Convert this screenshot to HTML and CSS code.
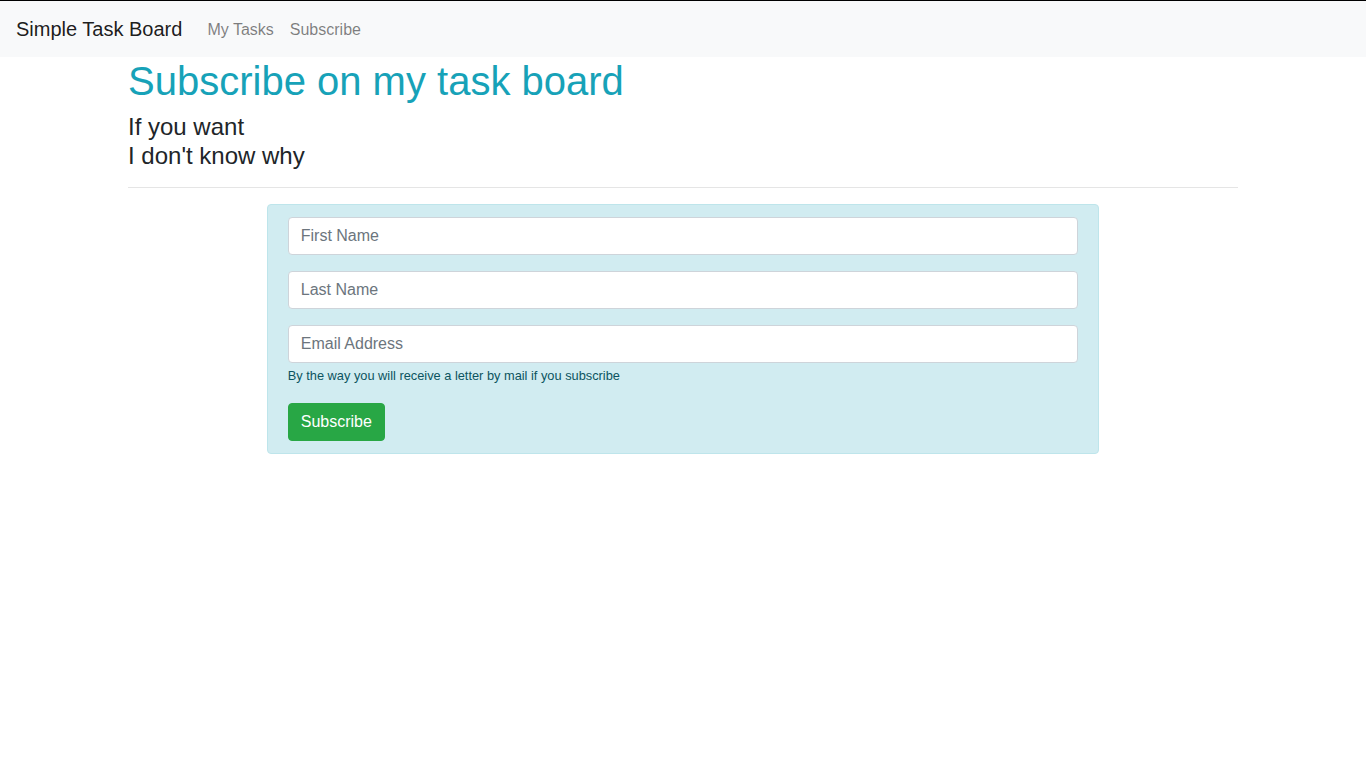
FILE: index.html
```html
<!DOCTYPE html>
<html lang="en">
<head>
<meta charset="utf-8">
<title>Simple Task Board</title>
<link rel="stylesheet" href="styles.css">
</head>
<body>
<nav class="navbar">
  <a class="brand" href="#">Simple Task Board</a>
  <ul class="nav">
    <li><a class="nav-link" href="#">My Tasks</a></li>
    <li><a class="nav-link" href="#">Subscribe</a></li>
  </ul>
</nav>
<main class="container">
  <h1 class="title">Subscribe on my task board</h1>
  <h4 class="lead">If you want<br>I don't know why</h4>
  <hr class="divider">
  <form class="alert-box">
    <div class="form-group">
      <input class="form-control" type="text" placeholder="First Name">
    </div>
    <div class="form-group">
      <input class="form-control" type="text" placeholder="Last Name">
    </div>
    <div class="form-group">
      <input class="form-control" type="email" placeholder="Email Address">
      <small class="form-text">By the way you will receive a letter by mail if you subscribe</small>
    </div>
    <button class="btn-success" type="button">Subscribe</button>
  </form>
</main>
</body>
</html>
```

FILE: styles.css
```css
* { box-sizing: border-box; }
html, body { margin: 0; padding: 0; }
body {
  font-family: "Liberation Sans", Arial, sans-serif;
  font-size: 16px;
  line-height: 1.5;
  color: #212529;
  background: #fff;
  border-top: 1px solid #000;
}
.navbar {
  display: flex;
  align-items: center;
  background: #f8f9fa;
  padding: 8px 16px;
}
.brand {
  font-size: 20px;
  line-height: 30px;
  padding: 5px 0;
  margin-right: 17px;
  color: rgba(0,0,0,.9);
  text-decoration: none;
}
.nav {
  display: flex;
  list-style: none;
  margin: 0;
  padding: 0;
}
.nav-link {
  display: block;
  padding: 9px 8px 7px;
  color: rgba(0,0,0,.5);
  text-decoration: none;
}
.container {
  width: 1140px;
  margin: 0 auto;
  padding: 0 15px;
}
.title {
  margin: 0 0 8px;
  font-size: 40px;
  font-weight: 400;
  line-height: 1.2;
  color: #17a2b8;
}
.lead {
  margin: 0;
  font-size: 24px;
  font-weight: 400;
  line-height: 1.2;
}
.divider {
  margin: 16px 0;
  border: 0;
  border-top: 1px solid rgba(0,0,0,.1);
}
.alert-box {
  width: 75%;
  margin: 0 auto;
  padding: 12px 20px;
  background: #d1ecf1;
  border: 1px solid #bee5eb;
  border-radius: 4px;
  color: #0c5460;
}
.form-group { margin-bottom: 16px; }
.form-control {
  display: block;
  width: 100%;
  height: 38px;
  padding: 6px 12px;
  font-family: inherit;
  font-size: 16px;
  line-height: 1.5;
  color: #495057;
  background: #fff;
  border: 1px solid #ced4da;
  border-radius: 4px;
}
.form-control::placeholder { color: #6c757d; opacity: 1; }
.form-text {
  font-size: 12.8px;
  color: #0c5460;
}
.btn-success {
  display: inline-block;
  padding: 6px 12px;
  font-family: inherit;
  font-size: 16px;
  line-height: 1.5;
  color: #fff;
  background: #28a745;
  border: 1px solid #28a745;
  border-radius: 4px;
}
```
